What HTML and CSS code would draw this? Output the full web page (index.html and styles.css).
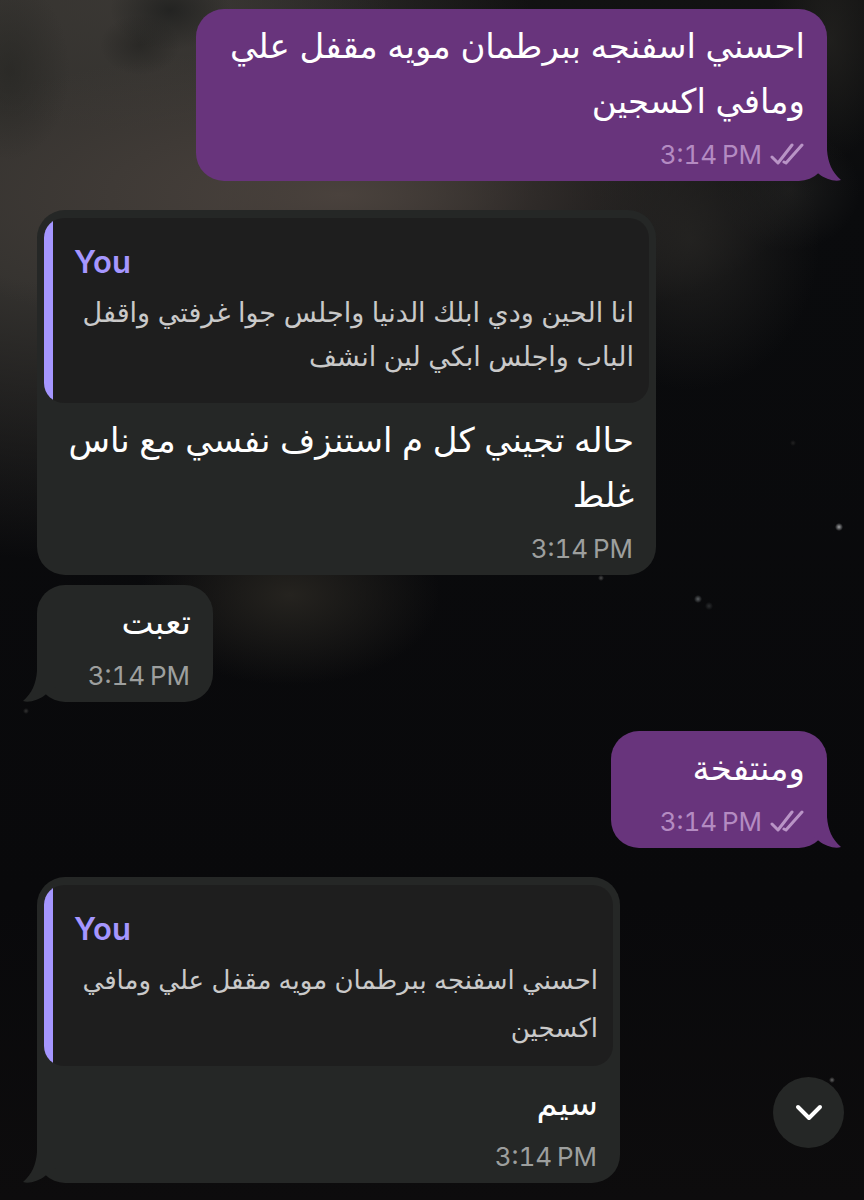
FILE: index.html
```
<!DOCTYPE html>
<html lang="ar">

<head>
	<meta charset="utf-8">
	<meta name="viewport" content="width=device-width, initial-scale=1">
	<title>Chat</title>
	<link rel="stylesheet" href="styles.css">
</head>

<body>
	<svg class="symbols" aria-hidden="true">
		<symbol id="tail" viewBox="0 0 36 36">
			<path d="M22 0V5C23 18 27 27 36 35C30 37 20 34 14 29L0 18V0Z" />
		</symbol>
		<symbol id="checks" viewBox="0 0 34 24">
			<path d="M2 14L8 20L22 2M14 19L16 20L32 2" />
		</symbol>
	</svg>

	<main class="chat">
		<div class="bubble sent wide">
			<p class="text" dir="rtl">احسني اسفنجه ببرطمان مويه مقفل علي<br>ومافي اكسجين</p>
			<div class="meta"><time>3:14&#8201;PM</time><svg class="checks"><use href="#checks" /></svg></div>
			<svg class="tail"><use href="#tail" /></svg>
		</div>

		<div class="bubble received reply">
			<blockquote class="quote">
				<strong>You</strong>
				<p dir="rtl">انا الحين ودي ابلك الدنيا واجلس جوا غرفتي واقفل<br>الباب واجلس ابكي لين انشف</p>
			</blockquote>
			<p class="text" dir="rtl">حاله تجيني كل م استنزف نفسي مع ناس<br>غلط</p>
			<div class="meta"><time>3:14&#8201;PM</time></div>
		</div>

		<div class="bubble received short follow">
			<p class="text" dir="rtl">تعبت</p>
			<div class="meta"><time>3:14&#8201;PM</time></div>
			<svg class="tail"><use href="#tail" /></svg>
		</div>

		<div class="bubble sent">
			<p class="text" dir="rtl">ومنتفخة</p>
			<div class="meta"><time>3:14&#8201;PM</time><svg class="checks"><use href="#checks" /></svg></div>
			<svg class="tail"><use href="#tail" /></svg>
		</div>

		<div class="bubble received reply-small">
			<blockquote class="quote loose">
				<strong>You</strong>
				<p dir="rtl">احسني اسفنجه ببرطمان مويه مقفل علي ومافي<br>اكسجين</p>
			</blockquote>
			<p class="text" dir="rtl">سيم</p>
			<div class="meta"><time>3:14&#8201;PM</time></div>
			<svg class="tail"><use href="#tail" /></svg>
		</div>
	</main>

	<button class="scroll-down" aria-label="Scroll to latest message">
		<svg viewBox="0 0 30 20"><path d="M4 4L15 15L26 4" /></svg>
	</button>
</body>

</html>
```
FILE: styles.css
```
* {
	box-sizing: border-box;
}

/* night sky: a few stars first, then the clouds */
body {
	margin: 0;
	min-height: 100vh;
	color: #fff;
	font-family: Inter, "DejaVu Sans", sans-serif;
	background-color: #09090b;
	background-image:
		radial-gradient(circle at 839px 527px, #a0a2a4 0, transparent 4px),
		radial-gradient(circle at 698px 599px, #5b5f62 0, transparent 4px),
		radial-gradient(circle at 709px 606px, #2c2e30 0, transparent 4px),
		radial-gradient(circle at 601px 578px, #4c4c4c 0, transparent 3px),
		radial-gradient(circle at 832px 1080px, #666 0, transparent 3px),
		radial-gradient(circle at 26px 711px, #333 0, transparent 3px),
		radial-gradient(circle at 793px 443px, #222 0, transparent 3px),
		radial-gradient(ellipse 60px 40px at 170px 10px, rgba(30, 31, 30, 0.8), transparent),
		radial-gradient(ellipse 40px 30px at 140px 45px, rgba(32, 32, 30, 0.6), transparent),
		radial-gradient(ellipse 60px 90px at 10px 70px, rgba(36, 36, 33, 0.6), transparent),
		radial-gradient(ellipse 150px 90px at 290px 595px, #25231f, transparent),
		radial-gradient(ellipse 130px 150px at 690px 240px, rgba(38, 37, 35, 0.8), transparent),
		radial-gradient(ellipse 70px 60px at 790px 190px, rgba(34, 34, 33, 0.7), transparent),
		radial-gradient(ellipse 60px 120px at 830px 40px, rgba(38, 37, 34, 0.7), transparent),
		radial-gradient(ellipse 460px 150px at 340px 195px, #4a423d, transparent),
		radial-gradient(ellipse 260px 130px at 130px 0px, rgba(60, 57, 53, 0.7), transparent),
		radial-gradient(ellipse 480px 460px at 60px 100px, #34322f 40%, transparent),
		linear-gradient(#121212, #0a0b0d 200px, #09090b 900px, #0d0c0d);
}

p,
blockquote {
	margin: 0;
}

.symbols {
	display: none;
}

.chat {
	display: flex;
	flex-direction: column;
	align-items: flex-start;
	gap: 29px;
	padding: 9px 37px 17px;
}

.bubble {
	position: relative;
	width: 216px;
	max-width: 100%;
	padding-bottom: 10px;
	border-radius: 28px;
}

.sent {
	align-self: flex-end;
	background: #68347c;
	fill: #68347c;
}

.received {
	background: #252726;
	fill: #252726;
}

.wide {
	width: 631px;
}

.reply {
	width: 619px;
	padding-top: 8px;
}

.reply-small {
	width: 583px;
	padding-top: 8px;
}

.short {
	width: 176px;
}

.follow {
	margin-top: -19px;
}

.text {
	padding: 9px 22px 0;
	font-size: 34px;
	line-height: 55px;
	white-space: nowrap;
}

.meta {
	display: flex;
	justify-content: flex-end;
	align-items: center;
	gap: 8px;
	margin-top: 11px;
	padding: 0 23px;
	color: #9d9f9e;
	font-size: 26px;
	font-variant-numeric: tabular-nums;
	line-height: 32px;
}

.sent .meta {
	color: #b48bc2;
}

.checks {
	width: 34px;
	height: 24px;
	fill: none;
	stroke: #b994c6;
	stroke-width: 3px;
	stroke-linecap: round;
	stroke-linejoin: round;
}

/* The tail hangs off the lower corner of the last bubble in a group */
.tail {
	position: absolute;
	right: -14px;
	bottom: 0;
	width: 36px;
	height: 36px;
}

.received .tail {
	right: auto;
	left: -14px;
	transform: scaleX(-1);
}

.quote {
	margin: 0 7px;
	padding: 22px 15px 24px 30px;
	border-radius: 20px;
	background: linear-gradient(90deg, #a596ff 9px, #1e1e1e 9px);
	color: #c9c9c9;
}

.quote strong {
	display: block;
	color: #a596ff;
	font-size: 31px;
	font-weight: 600;
	line-height: 44px;
}

.quote p {
	margin-top: 7px;
	font-size: 27px;
	line-height: 44px;
	white-space: nowrap;
}

.loose {
	padding-bottom: 14px;
}

.loose p {
	margin-top: 5px;
	font-size: 26px;
	line-height: 48px;
}

.scroll-down {
	position: fixed;
	right: 20px;
	bottom: 52px;
	display: flex;
	align-items: center;
	justify-content: center;
	width: 71px;
	height: 71px;
	padding: 0;
	border: 0;
	border-radius: 50%;
	background: #252726;
}

.scroll-down svg {
	width: 30px;
	height: 20px;
	fill: none;
	stroke: #fff;
	stroke-width: 4px;
	stroke-linecap: round;
	stroke-linejoin: round;
}
```
